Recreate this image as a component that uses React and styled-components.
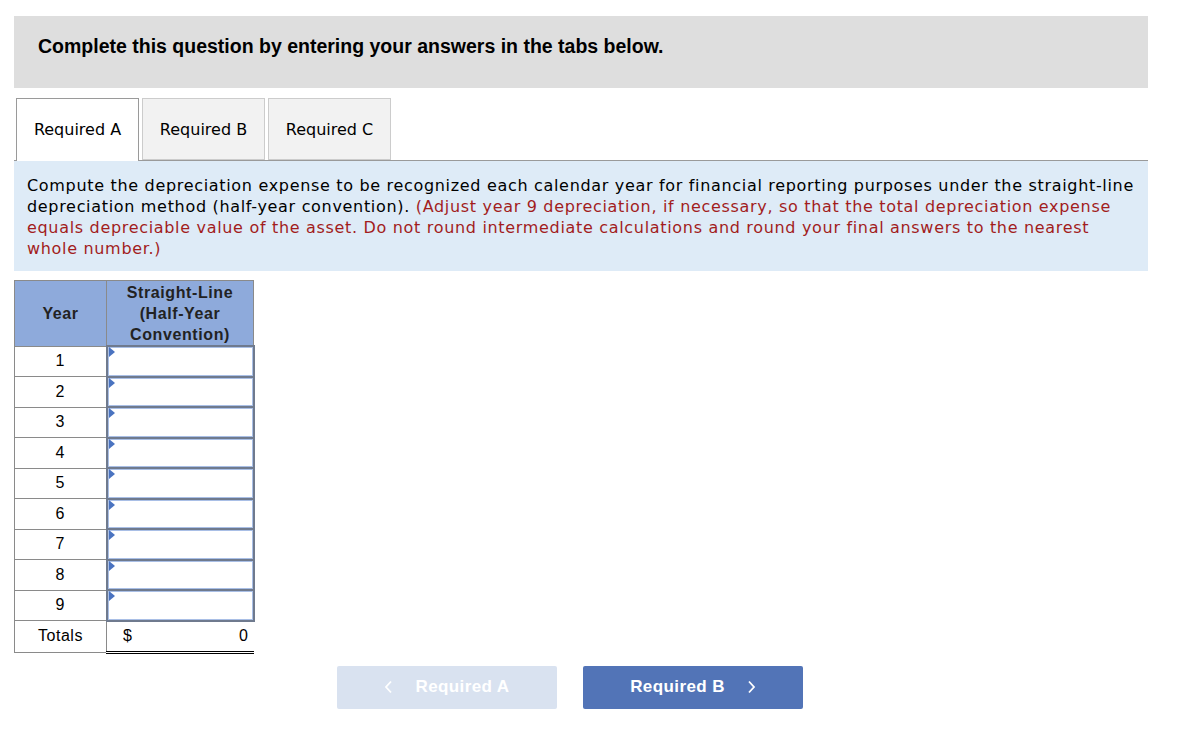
import React from "react";
import styled, { createGlobalStyle } from "styled-components";

const GlobalStyle = createGlobalStyle`
  body {
    margin: 0;
    background: #ffffff;
    font-family: "Liberation Sans", Arial, sans-serif;
    color: #000;
  }
`;

const Page = styled.div`
  width: 1134px;
  padding: 16px 0 0 14px;
`;

const Banner = styled.div`
  box-sizing: border-box;
  height: 72px;
  background: #dedede;
  padding: 19px 0 0 24px;
  font-size: 19.5px;
  line-height: 22px;
  font-weight: bold;
`;

const TabRow = styled.div`
  display: flex;
  gap: 3px;
  margin-top: 10px;
  padding-left: 2px;
  border-bottom: 1px solid #9a9a9a;
  height: 62px;
  align-items: flex-end;
`;

const Tab = styled.div`
  box-sizing: border-box;
  width: 123px;
  height: ${props => (props.active ? "63px" : "62px")};
  margin-bottom: ${props => (props.active ? "-1px" : "0")};
  display: flex;
  align-items: center;
  justify-content: center;
  font-family: "DejaVu Sans", Verdana, sans-serif;
  font-size: 16px;
  background: ${props => (props.active ? "#ffffff" : "#f2f2f2")};
  border: 1px solid ${props => (props.active ? "#9a9a9a" : "#cccccc")};
  border-bottom: ${props => (props.active ? "none" : "1px solid #cccccc")};
  padding-bottom: ${props => (props.active ? "1px" : "0")};
`;

const Instructions = styled.div`
  background: #deebf7;
  padding: 14px 13px 12px 13px;
  font-family: "DejaVu Sans", Verdana, sans-serif;
  font-size: 16px;
  letter-spacing: 0.68px;
  line-height: 21px;
`;

const Note = styled.span`
  color: #a21d1d;
`;

const Table = styled.table`
  margin-top: 9px;
  border-collapse: collapse;
  font-family: "Liberation Sans", Arial, sans-serif;
  font-size: 16px;
  letter-spacing: 0.5px;
`;

const HeadCell = styled.th`
  background: #8eaadb;
  border: 1px solid #8a8a8a;
  height: 64px;
  width: ${props => props.w}px;
  padding: 0;
  font-weight: bold;
  line-height: 21px;
  letter-spacing: 0.6px;
  color: #222;
`;

const YearCell = styled.td`
  border: 1px solid #8a8a8a;
  text-align: center;
  padding: 0;
`;

const InputCell = styled.td`
  border: 2px solid #6f7a8e;
  padding: 0;
`;

const InputBox = styled.div`
  position: relative;
  box-sizing: border-box;
  height: 28.5px;
  border: 1px solid #a9bfe6;
  background: #fff;
`;

const Flag = styled.span`
  position: absolute;
  left: 0;
  top: -1px;
  width: 0;
  height: 0;
  border-top: 5px solid transparent;
  border-bottom: 5px solid transparent;
  border-left: 6px solid #4a73c0;
`;

const TotalsLabel = styled.td`
  border: 1px solid #8a8a8a;
  text-align: center;
  height: 29px;
  padding: 0;
`;

const TotalCell = styled.td`
  border: none;
  border-bottom: 3px double #000;
  border-left: 1px solid #8a8a8a;
  height: 29px;
  padding: 0 5px 0 16px;
`;

const TotalInner = styled.div`
  display: flex;
  justify-content: space-between;
`;

const Nav = styled.div`
  width: 1112px;
  display: flex;
  justify-content: center;
  gap: 26px;
  margin-top: 12px;
`;

const NavButton = styled.div`
  width: 220px;
  height: 43px;
  border-radius: 2px;
  background: ${props => (props.disabled ? "#d9e2f0" : "#5274b7")};
  color: #ffffff;
  display: flex;
  align-items: center;
  justify-content: center;
  gap: 22px;
  font-family: "Liberation Sans", Arial, sans-serif;
  font-weight: bold;
  font-size: 17px;
  letter-spacing: 0.4px;
`;

const Chevron = ({ dir }) => (
  <svg width="9" height="14" viewBox="0 0 9 14">
    <path
      d={dir === "left" ? "M7 1.5 L2 7 L7 12.5" : "M2 1.5 L7 7 L2 12.5"}
      fill="none"
      stroke="#fff"
      strokeWidth="1.8"
    />
  </svg>
);

const years = [1, 2, 3, 4, 5, 6, 7, 8, 9];

export default function App() {
  return (
    <Page>
      <GlobalStyle />
      <Banner>Complete this question by entering your answers in the tabs below.</Banner>
      <TabRow>
        <Tab active>Required A</Tab>
        <Tab>Required B</Tab>
        <Tab>Required C</Tab>
      </TabRow>
      <Instructions>
        Compute the depreciation expense to be recognized each calendar year for financial reporting purposes under the straight-line depreciation method (half-year convention).{" "}
        <Note>
          (Adjust year 9 depreciation, if necessary, so that the total depreciation expense equals depreciable value of the asset. Do not round intermediate calculations and round your final answers to the nearest whole number.)
        </Note>
      </Instructions>
      <Table>
        <thead>
          <tr>
            <HeadCell w={91}>Year</HeadCell>
            <HeadCell w={146}>
              Straight-Line
              <br />
              (Half-Year
              <br />
              Convention)
            </HeadCell>
          </tr>
        </thead>
        <tbody>
          {years.map(y => (
            <tr key={y}>
              <YearCell>{y}</YearCell>
              <InputCell>
                <InputBox>
                  <Flag />
                </InputBox>
              </InputCell>
            </tr>
          ))}
          <tr>
            <TotalsLabel>Totals</TotalsLabel>
            <TotalCell>
              <TotalInner>
                <span>$</span>
                <span>0</span>
              </TotalInner>
            </TotalCell>
          </tr>
        </tbody>
      </Table>
      <Nav>
        <NavButton disabled>
          <Chevron dir="left" />
          Required A
        </NavButton>
        <NavButton>
          Required B
          <Chevron dir="right" />
        </NavButton>
      </Nav>
    </Page>
  );
}
